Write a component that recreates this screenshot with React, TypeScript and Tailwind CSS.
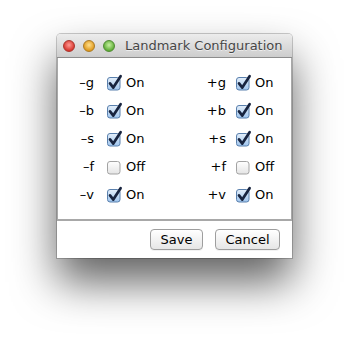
import React from "react";

const rows = [
  { left: "–g", right: "+g", on: true },
  { left: "–b", right: "+b", on: true },
  { left: "–s", right: "+s", on: true },
  { left: "–f", right: "+f", on: false },
  { left: "–v", right: "+v", on: true },
];

function Check({ on }: { on: boolean }) {
  return (
    <svg width="15" height="15" viewBox="0 0 15 15" className="overflow-visible">
      <defs>
        <linearGradient id="cbOn" x1="0" y1="0" x2="0" y2="1">
          <stop offset="0" stopColor="#e4effa" />
          <stop offset="1" stopColor="#9fc5ee" />
        </linearGradient>
        <linearGradient id="cbOff" x1="0" y1="0" x2="0" y2="1">
          <stop offset="0" stopColor="#ffffff" />
          <stop offset="1" stopColor="#e4e4e4" />
        </linearGradient>
      </defs>
      <rect
        x="0.5"
        y="1.5"
        width="12.5"
        height="12.5"
        rx="2.5"
        fill={on ? "url(#cbOn)" : "url(#cbOff)"}
        stroke={on ? "#5a80ad" : "#a3a3a3"}
      />
      {on && (
        <path
          d="M3 7.4 L6.3 11.6 L13.6 0.2"
          fill="none"
          stroke="#18243f"
          strokeWidth="2.7"
          strokeLinecap="round"
          strokeLinejoin="round"
        />
      )}
    </svg>
  );
}

function Light({ from, to, edge }: { from: string; to: string; edge: string }) {
  return (
    <div
      className="w-[12px] h-[12px] rounded-full border"
      style={{ background: `radial-gradient(circle at 50% 40%, ${from}, ${to} 70%)`, borderColor: edge }}
    />
  );
}

export default function App() {
  return (
    <div className="w-[348px] h-[338px] bg-white pt-[34px] pl-[57px] font-['DejaVu_Sans',sans-serif]">
      <div className="w-[235px] h-[224px] bg-white flex flex-col rounded-t-[4px] shadow-[0_0_0_1px_rgba(0,0,0,0.2),0_24px_44px_rgba(0,0,0,0.62)]">
        {/* title bar */}
        <div className="h-[24px] flex items-center pl-[6px] rounded-t-[4px] bg-gradient-to-b from-[#ececec] to-[#cdcdcd] border-b border-[#8c8c8c]">
          <div className="flex items-center gap-[8px]">
            <Light from="#ff9a94" to="#d8372f" edge="#a8352d" />
            <Light from="#ffe08c" to="#e09a1e" edge="#a97a25" />
            <Light from="#c6f0a0" to="#5fae37" edge="#4f8a33" />
          </div>
          <span className="ml-[10px] text-[13px] text-[#464646] leading-none [text-shadow:0_1px_0_rgba(255,255,255,0.6)]">
            Landmark Configuration
          </span>
        </div>

        {/* settings panel */}
        <div className="h-[163px] border-x border-b-2 border-[#a8a8a8] pt-[11px] text-[13px] text-black">
          {rows.map((r) => (
            <div key={r.left} className="h-[28px] flex items-center">
              <div className="w-[132px] flex items-center">
                <span className="w-[36px] text-right">{r.left}</span>
                <span className="ml-[13px] flex"><Check on={r.on} /></span>
                <span className="ml-[4px]">{r.on ? "On" : "Off"}</span>
              </div>
              <div className="flex items-center">
                <span className="w-[36px] text-right">{r.right}</span>
                <span className="ml-[10px] flex"><Check on={r.on} /></span>
                <span className="ml-[4px]">{r.on ? "On" : "Off"}</span>
              </div>
            </div>
          ))}
        </div>

        {/* buttons */}
        <div className="flex-1 flex items-center justify-end gap-[12px] pr-[12px] pb-[1px]">
          <button className="w-[53px] h-[21px] rounded-[4px] border border-[#9e9e9e] bg-gradient-to-b from-white to-[#e6e6e6] text-[13px] text-black leading-none shadow-[0_1px_0_rgba(0,0,0,0.05)]">
            Save
          </button>
          <button className="w-[65px] h-[21px] rounded-[4px] border border-[#9e9e9e] bg-gradient-to-b from-white to-[#e6e6e6] text-[13px] text-black leading-none shadow-[0_1px_0_rgba(0,0,0,0.05)]">
            Cancel
          </button>
        </div>
      </div>
    </div>
  );
}
